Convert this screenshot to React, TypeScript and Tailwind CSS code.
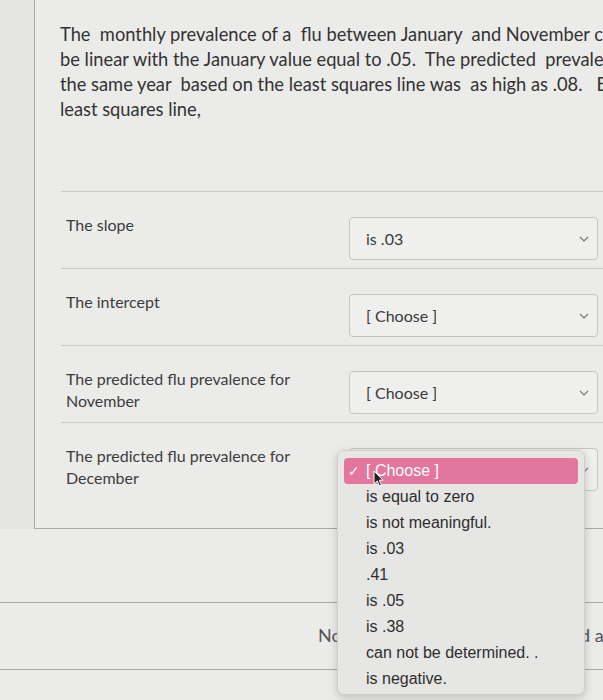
import React from 'react';

const rows = [
  { label: ['The slope'], value: 'is .03' },
  { label: ['The intercept'], value: '[ Choose ]' },
  { label: ['The predicted flu prevalence for', 'November'], value: '[ Choose ]' },
];

const options = [
  'is equal to zero',
  'is not meaningful.',
  'is .03',
  '.41',
  'is .05',
  'is .38',
  'can not be determined. .',
  'is negative.',
];

const Chevron = () => (
  <svg width="10" height="6" viewBox="0 0 10 6" className="text-[#777]">
    <path d="M1 1l4 4 4-4" fill="none" stroke="currentColor" strokeWidth="1.2" />
  </svg>
);

const SelectBox: React.FC<{ value: string }> = ({ value }) => (
  <div className="w-[249px] h-[43px] mt-[25px] flex items-center justify-between pl-4 pr-2 border border-[#c4c4c2] rounded-[4px] bg-[#efefed] text-[16px] text-[#3a3a3a]">
    <span>{value}</span>
    <Chevron />
  </div>
);

export default function App() {
  return (
    <div className="w-[603px] h-[700px] overflow-hidden bg-[#ebebe9] flex flex-col relative font-['Lato',sans-serif] text-[#3d3d3d]">
      <div className="flex shrink-0 h-[529px] bg-[#e4e4e2]">
        {/* Question box */}
        <div className="ml-[34px] w-[620px] shrink-0 bg-[#ebebe9] border-l border-b border-[#a9a9a7] h-[529px] flex flex-col">
          <div className="pl-[25px] pt-[22px] text-[18.3px] leading-[25px] text-[#333] whitespace-pre">
            <div>The  monthly prevalence of a  flu between January  and November c</div>
            <div>be linear with the January value equal to .05.  The predicted  prevalence</div>
            <div>the same year  based on the least squares line was  as high as .08.   E</div>
            <div>least squares line,</div>
          </div>

          <div className="ml-[26px] mt-[69px] flex flex-col">
            {rows.map((r, i) => (
              <div key={i} className="border-t border-[#c9c9c7] h-[77px] flex">
                <div className="w-[288px] pl-[5px] pt-[22px] text-[16px] leading-[22px]">
                  {r.label.map((l, j) => (
                    <div key={j}>{l}</div>
                  ))}
                </div>
                <SelectBox value={r.value} />
              </div>
            ))}
            <div className="border-t border-[#c9c9c7] flex">
              <div className="w-[288px] pl-[5px] pt-[22px] text-[16px] leading-[22px]">
                <div>The predicted flu prevalence for</div>
                <div>December</div>
              </div>
              <SelectBox value="" />
            </div>
          </div>
        </div>
      </div>

      {/* Status area */}
      <div className="h-[73px] shrink-0" />
      <div className="h-[68px] shrink-0 border-t border-b border-[#a9a9a7] pl-[318px] pt-[20px] text-[18px] leading-[24px] text-[#555] whitespace-nowrap">
        No new data to save. Last checked at 9:47pm
      </div>
      <div className="flex-1" />

      {/* Open dropdown menu */}
      <div className="absolute left-[337px] top-[450px] w-[248px] h-[245px] rounded-[7px] border border-[#cfcfcd] bg-[#e6e6e4] shadow-[0_3px_10px_rgba(0,0,0,0.18)] px-[6px] pt-[7px] font-['Liberation_Sans',sans-serif] text-[16px] text-[#2e2e2e]">
        <div className="h-[26px] rounded-[4px] bg-[#e2769d] text-white flex items-center relative">
          <span className="w-[22px] pl-[4px] text-[14px]">✓</span>
          <span>[ Choose ]</span>
          <svg className="absolute left-[29px] top-[12px]" width="12" height="17" viewBox="0 0 12 17">
            <path d="M1 1v13l3.2-3 2.3 5 2-1-2.3-4.8H10z" fill="#222" stroke="#fff" strokeWidth="1" />
          </svg>
        </div>
        {options.map((o, i) => (
          <div key={i} className="h-[26px] leading-[26px] pl-[22px]">
            {o}
          </div>
        ))}
      </div>
    </div>
  );
}
